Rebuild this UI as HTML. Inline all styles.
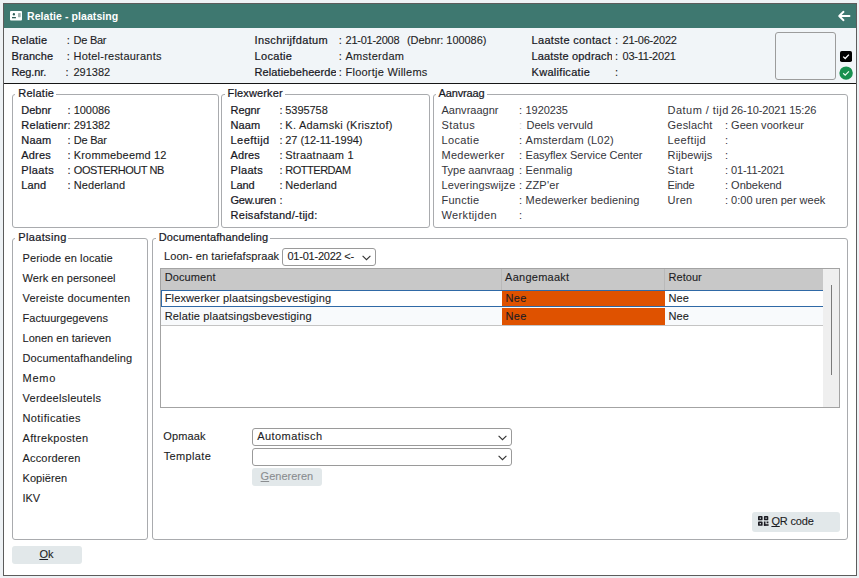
<!DOCTYPE html>
<html><head><meta charset="utf-8"><style>
html,body{margin:0;padding:0;width:859px;height:578px;overflow:hidden;background:#eef2f5;}
.a{position:absolute;}
.t{position:absolute;font-family:"Liberation Sans",sans-serif;font-size:11px;line-height:15px;color:#1d1d24;white-space:nowrap;-webkit-text-stroke:0.1px currentColor;}
.m{-webkit-text-stroke:0.22px currentColor;color:#18181f}
.w{color:#fff;-webkit-text-stroke:0;}
.g{color:#34343a;-webkit-text-stroke:0;}
u{text-decoration:underline;text-underline-offset:1px;text-decoration-skip-ink:none;}
</style></head><body>
<div class="a" style="left:3px;top:3px;width:854px;height:573px;border:1px solid #5c5c5c;background:#fff;box-sizing:border-box"></div>
<div class="a" style="left:4px;top:4px;width:852px;height:24px;background:#3e7870"></div>
<svg class="a" style="left:10px;top:11px" width="12" height="10" viewBox="0 0 12 10">
<rect x="0" y="0" width="12" height="9.6" rx="1" fill="#fcfffe"/>
<ellipse cx="3.9" cy="3.3" rx="1.1" ry="1.25" fill="#2e5f58"/>
<rect x="2" y="6" width="3.9" height="1.3" fill="#2e5f58"/>
<rect x="8" y="2.1" width="2.7" height="4.1" rx="0.4" fill="#a3b5b2"/>
</svg>
<div class="t w" style="left:27px;top:9px;letter-spacing:0.075px;font-weight:bold;font-size:10.5px">Relatie - plaatsing</div>
<svg class="a" style="left:837px;top:10px" width="14" height="12" viewBox="0 0 14 12">
<path d="M12.5 6 H2.5 M6.5 1.8 L2.2 6 L6.5 10.2" stroke="#fff" stroke-width="1.9" fill="none" stroke-linecap="round" stroke-linejoin="round"/>
</svg>
<div class="a" style="left:4px;top:28px;width:852px;height:55px;background:#f1f5f8"></div>
<div class="a" style="left:4px;top:83px;width:852px;height:1px;background:#161616"></div>
<div class="t m" style="left:11.5px;top:33px;letter-spacing:0.210px;">Relatie</div>
<div class="t " style="left:66.8px;top:33px;">:</div>
<div class="t " style="left:73.5px;top:33px;letter-spacing:-0.247px;">De Bar</div>
<div class="t m" style="left:11.5px;top:49px;letter-spacing:0.088px;">Branche</div>
<div class="t " style="left:66.8px;top:49px;">:</div>
<div class="t " style="left:73.5px;top:49px;letter-spacing:0.221px;">Hotel-restaurants</div>
<div class="t m" style="left:11.5px;top:65px;letter-spacing:-0.128px;">Reg.nr.</div>
<div class="t " style="left:65.4px;top:65px;">:</div>
<div class="t " style="left:73.5px;top:65px;letter-spacing:-0.021px;">291382</div>
<div class="t m" style="left:254.5px;top:33px;letter-spacing:0.364px;">Inschrijfdatum</div>
<div class="t " style="left:338.7px;top:33px;">:</div>
<div class="t " style="left:345.5px;top:33px;letter-spacing:-0.241px;">21-01-2008</div>
<div class="t " style="left:407px;top:33px;letter-spacing:-0.050px;">(Debnr: 100086)</div>
<div class="t m" style="left:254.5px;top:49px;letter-spacing:0.322px;">Locatie</div>
<div class="t " style="left:338.7px;top:49px;">:</div>
<div class="t " style="left:345.5px;top:49px;letter-spacing:0.283px;">Amsterdam</div>
<div class="a" style="left:254px;top:65px;width:82px;height:15px;overflow:hidden">
<div class="t m" style="left:0.5px;top:0px;letter-spacing:0.105px;">Relatiebeheerder</div>
</div>
<div class="t " style="left:338.7px;top:65px;">:</div>
<div class="t " style="left:345.5px;top:65px;letter-spacing:0.238px;">Floortje Willems</div>
<div class="t m" style="left:531.5px;top:33px;letter-spacing:0.328px;">Laatste contact</div>
<div class="t " style="left:615px;top:33px;">:</div>
<div class="t " style="left:622.5px;top:33px;letter-spacing:-0.207px;">21-06-2022</div>
<div class="a" style="left:531px;top:49px;width:81px;height:15px;overflow:hidden">
<div class="t m" style="left:0.5px;top:0px;letter-spacing:0.172px;">Laatste opdracht</div>
</div>
<div class="t " style="left:615px;top:49px;">:</div>
<div class="t " style="left:622.5px;top:49px;letter-spacing:-0.228px;">03-11-2021</div>
<div class="t m" style="left:531.5px;top:65px;letter-spacing:0.298px;">Kwalificatie</div>
<div class="t " style="left:615px;top:65px;">:</div>
<div class="a" style="left:775px;top:32px;width:61px;height:48px;border:1px solid #9c9c9c;border-radius:3px;box-sizing:border-box;background:#f1f5f8"></div>
<svg class="a" style="left:840px;top:51px" width="12" height="11" viewBox="0 0 12 11">
<rect x="0" y="0" width="12" height="11" rx="1.8" fill="#000"/>
<path d="M3.2 5.6 L5.2 7.5 L8.9 3.6" stroke="#fff" stroke-width="1.3" fill="none"/>
</svg>
<svg class="a" style="left:839px;top:66px" width="15" height="15" viewBox="0 0 15 15">
<circle cx="7.1" cy="7.1" r="6.7" fill="#17904f"/>
<path d="M4.2 7.3 L6.2 9.1 L9.9 5.4" stroke="#f0fff4" stroke-width="1.2" fill="none"/>
</svg>
<div class="a" style="left:12px;top:94px;width:207px;height:134px;border:1px solid #a9abae;border-radius:3px;box-sizing:border-box"></div>
<div class="a" style="left:15.2px;top:93px;width:40.599999999999994px;height:3px;background:#fff"></div>
<div class="t m" style="left:18.2px;top:86px;letter-spacing:0.260px;">Relatie</div>
<div class="a" style="left:221px;top:94px;width:209px;height:134px;border:1px solid #a9abae;border-radius:3px;box-sizing:border-box"></div>
<div class="a" style="left:224.5px;top:93px;width:60.0px;height:3px;background:#fff"></div>
<div class="t m" style="left:227.5px;top:86px;letter-spacing:0.157px;">Flexwerker</div>
<div class="a" style="left:433px;top:94px;width:415px;height:134px;border:1px solid #a9abae;border-radius:3px;box-sizing:border-box"></div>
<div class="a" style="left:435.5px;top:93px;width:51.0px;height:3px;background:#fff"></div>
<div class="t m" style="left:438.5px;top:86px;letter-spacing:-0.127px;">Aanvraag</div>
<div class="a" style="left:12px;top:238px;width:136px;height:302px;border:1px solid #a9abae;border-radius:3px;box-sizing:border-box"></div>
<div class="a" style="left:15.2px;top:237px;width:53.0px;height:3px;background:#fff"></div>
<div class="t m" style="left:18.2px;top:230px;letter-spacing:0.369px;">Plaatsing</div>
<div class="a" style="left:152px;top:238px;width:696px;height:302px;border:1px solid #a9abae;border-radius:3px;box-sizing:border-box"></div>
<div class="a" style="left:155.8px;top:237px;width:114.09999999999997px;height:3px;background:#fff"></div>
<div class="t m" style="left:158.8px;top:230px;letter-spacing:0.127px;">Documentafhandeling</div>
<div class="t m" style="left:21.3px;top:103px;letter-spacing:-0.015px;">Debnr</div>
<div class="t " style="left:67.4px;top:103px;">:</div>
<div class="t " style="left:73.8px;top:103px;letter-spacing:-0.081px;">100086</div>
<div class="t m" style="left:21.3px;top:118px;letter-spacing:0.272px;">Relatienr</div>
<div class="t " style="left:67.4px;top:118px;">:</div>
<div class="t " style="left:73.8px;top:118px;letter-spacing:-0.081px;">291382</div>
<div class="t m" style="left:21.3px;top:133px;letter-spacing:0.186px;">Naam</div>
<div class="t " style="left:67.4px;top:133px;">:</div>
<div class="t " style="left:73.8px;top:133px;letter-spacing:-0.247px;">De Bar</div>
<div class="t m" style="left:21.3px;top:148px;letter-spacing:0.166px;">Adres</div>
<div class="t " style="left:67.4px;top:148px;">:</div>
<div class="t " style="left:73.8px;top:148px;letter-spacing:0.163px;">Krommebeemd 12</div>
<div class="t m" style="left:21.3px;top:163px;letter-spacing:0.366px;">Plaats</div>
<div class="t " style="left:67.4px;top:163px;">:</div>
<div class="t " style="left:73.8px;top:163px;letter-spacing:-0.429px;">OOSTERHOUT NB</div>
<div class="t m" style="left:21.3px;top:178px;letter-spacing:0.143px;">Land</div>
<div class="t " style="left:67.4px;top:178px;">:</div>
<div class="t " style="left:73.8px;top:178px;letter-spacing:0.068px;">Nederland</div>
<div class="t m" style="left:230.5px;top:103px;letter-spacing:-0.065px;">Regnr</div>
<div class="t " style="left:279.4px;top:103px;">:</div>
<div class="t " style="left:285.3px;top:103px;letter-spacing:-0.054px;">5395758</div>
<div class="t m" style="left:230.5px;top:118px;letter-spacing:0.119px;">Naam</div>
<div class="t " style="left:279.4px;top:118px;">:</div>
<div class="t " style="left:285.3px;top:118px;letter-spacing:0.251px;">K. Adamski (Krisztof)</div>
<div class="t m" style="left:230.5px;top:133px;letter-spacing:0.461px;">Leeftijd</div>
<div class="t " style="left:279.4px;top:133px;">:</div>
<div class="t " style="left:285.3px;top:133px;letter-spacing:-0.069px;">27 (12-11-1994)</div>
<div class="t m" style="left:230.5px;top:148px;letter-spacing:0.116px;">Adres</div>
<div class="t " style="left:279.4px;top:148px;">:</div>
<div class="t " style="left:285.3px;top:148px;letter-spacing:0.206px;">Straatnaam 1</div>
<div class="t m" style="left:230.5px;top:163px;letter-spacing:0.326px;">Plaats</div>
<div class="t " style="left:279.4px;top:163px;">:</div>
<div class="t " style="left:285.3px;top:163px;letter-spacing:-0.483px;">ROTTERDAM</div>
<div class="t m" style="left:230.5px;top:178px;letter-spacing:-0.090px;">Land</div>
<div class="t " style="left:279.4px;top:178px;">:</div>
<div class="t " style="left:285.3px;top:178px;letter-spacing:0.093px;">Nederland</div>
<div class="t m" style="left:230.5px;top:193px;letter-spacing:-0.226px;">Gew.uren</div>
<div class="t " style="left:279.4px;top:193px;">:</div>
<div class="t m" style="left:230.5px;top:208px;letter-spacing:0.287px;">Reisafstand/-tijd:</div>
<div class="t g" style="left:441.5px;top:103px;letter-spacing:0.015px;">Aanvraagnr</div>
<div class="t g" style="left:519px;top:103px;">:</div>
<div class="t g" style="left:525.6px;top:103px;letter-spacing:-0.087px;">1920235</div>
<div class="t g" style="left:441.5px;top:118px;letter-spacing:0.403px;">Status</div>
<div class="t g" style="left:441.5px;top:133px;letter-spacing:0.338px;">Locatie</div>
<div class="t g" style="left:519px;top:133px;">:</div>
<div class="t g" style="left:525.6px;top:133px;letter-spacing:0.224px;">Amsterdam (L02)</div>
<div class="t g" style="left:441.5px;top:148px;letter-spacing:0.253px;">Medewerker</div>
<div class="t g" style="left:519px;top:148px;">:</div>
<div class="t g" style="left:525.6px;top:148px;letter-spacing:-0.022px;">Easyflex Service Center</div>
<div class="t g" style="left:441.5px;top:163px;letter-spacing:-0.023px;">Type aanvraag</div>
<div class="t g" style="left:519px;top:163px;">:</div>
<div class="t g" style="left:525.6px;top:163px;letter-spacing:0.135px;">Eenmalig</div>
<div class="t g" style="left:441.5px;top:178px;letter-spacing:0.127px;">Leveringswijze</div>
<div class="t g" style="left:519px;top:178px;">:</div>
<div class="t g" style="left:525.6px;top:178px;letter-spacing:0.169px;">ZZP'er</div>
<div class="t g" style="left:441.5px;top:193px;letter-spacing:0.238px;">Functie</div>
<div class="t g" style="left:519px;top:193px;">:</div>
<div class="t g" style="left:525.6px;top:193px;letter-spacing:0.137px;">Medewerker bediening</div>
<div class="t g" style="left:441.5px;top:208px;letter-spacing:0.360px;">Werktijden</div>
<div class="t g" style="left:519px;top:208px;">:</div>
<div class="t g" style="left:519px;top:118px;color:#d0d0d0">:</div>
<div class="t g" style="left:526.6px;top:118px;letter-spacing:-0.028px;">Deels vervuld</div>
<div class="t g" style="left:667.6px;top:103px;letter-spacing:0.461px;">Datum / tijd</div>
<div class="t g" style="left:667.6px;top:118px;letter-spacing:0.184px;">Geslacht</div>
<div class="t g" style="left:725px;top:118px;">:</div>
<div class="t g" style="left:731.1px;top:118px;letter-spacing:0.011px;">Geen voorkeur</div>
<div class="t g" style="left:667.6px;top:133px;letter-spacing:0.376px;">Leeftijd</div>
<div class="t g" style="left:725px;top:133px;">:</div>
<div class="t g" style="left:667.6px;top:148px;letter-spacing:0.163px;">Rijbewijs</div>
<div class="t g" style="left:725px;top:148px;">:</div>
<div class="t g" style="left:667.6px;top:163px;letter-spacing:0.493px;">Start</div>
<div class="t g" style="left:725px;top:163px;">:</div>
<div class="t g" style="left:731.1px;top:163px;letter-spacing:-0.206px;">01-11-2021</div>
<div class="t g" style="left:667.6px;top:178px;letter-spacing:-0.283px;">Einde</div>
<div class="t g" style="left:725px;top:178px;">:</div>
<div class="t g" style="left:731.1px;top:178px;letter-spacing:-0.023px;">Onbekend</div>
<div class="t g" style="left:667.6px;top:193px;letter-spacing:0.253px;">Uren</div>
<div class="t g" style="left:725px;top:193px;">:</div>
<div class="t g" style="left:731.1px;top:193px;letter-spacing:0.002px;">0:00 uren per week</div>
<div class="t g" style="left:731.1px;top:103px;letter-spacing:-0.103px;">26-10-2021 15:26</div>
<div class="t " style="left:22.5px;top:251px;letter-spacing:0.120px;">Periode en locatie</div>
<div class="t " style="left:22.5px;top:271px;letter-spacing:0.055px;">Werk en personeel</div>
<div class="t " style="left:22.5px;top:291px;letter-spacing:0.231px;">Vereiste documenten</div>
<div class="t " style="left:22.5px;top:311px;letter-spacing:0.029px;">Factuurgegevens</div>
<div class="t " style="left:22.5px;top:331px;letter-spacing:0.033px;">Lonen en tarieven</div>
<div class="t " style="left:22.5px;top:351px;letter-spacing:0.143px;">Documentafhandeling</div>
<div class="t " style="left:22.5px;top:371px;letter-spacing:0.779px;">Memo</div>
<div class="t " style="left:22.5px;top:391px;letter-spacing:0.271px;">Verdeelsleutels</div>
<div class="t " style="left:22.5px;top:411px;letter-spacing:0.391px;">Notificaties</div>
<div class="t " style="left:22.5px;top:431px;letter-spacing:0.340px;">Aftrekposten</div>
<div class="t " style="left:22.5px;top:451px;letter-spacing:0.172px;">Accorderen</div>
<div class="t " style="left:22.5px;top:471px;letter-spacing:0.067px;">Kopiëren</div>
<div class="t " style="left:22.5px;top:491px;letter-spacing:-0.015px;">IKV</div>
<div class="t " style="left:164px;top:249px;letter-spacing:0.090px;">Loon- en tariefafspraak</div>
<div class="a" style="left:282px;top:248px;width:94px;height:18px;border:1px solid #9a9a9a;border-radius:3px;box-sizing:border-box;background:#fff"></div>
<div class="t " style="left:287.4px;top:249px;letter-spacing:-0.218px;">01-01-2022 &lt;-</div>
<svg class="a" style="left:362px;top:255px" width="9" height="6" viewBox="0 0 9 6"><path d="M0.6 0.8 L4.5 4.7 L8.4 0.8" stroke="#333" stroke-width="1.1" fill="none"/></svg>
<div class="a" style="left:160px;top:268px;width:680px;height:140px;border:1px solid #a3a3a3;box-sizing:border-box;background:#fff"></div>
<div class="a" style="left:161px;top:269px;width:662px;height:21px;background:#c8c8c8"></div>
<div class="a" style="left:501px;top:269px;width:1px;height:21px;background:#b9b9b9"></div>
<div class="a" style="left:664px;top:269px;width:1px;height:21px;background:#b9b9b9"></div>
<div class="t " style="left:164.7px;top:270px;letter-spacing:0.109px;">Document</div>
<div class="t " style="left:505.1px;top:270px;letter-spacing:0.249px;">Aangemaakt</div>
<div class="t " style="left:668.5px;top:270px;letter-spacing:0.037px;">Retour</div>
<div class="a" style="left:161px;top:290px;width:662px;height:17px;border:1px solid #2f69a6;border-right:0;box-sizing:border-box;background:#fff"></div>
<div class="a" style="left:502px;top:291px;width:163px;height:15px;background:#df5200"></div>
<div class="t " style="left:164.7px;top:291px;letter-spacing:0.141px;">Flexwerker plaatsingsbevestiging</div>
<div class="t " style="left:505.6px;top:291px;letter-spacing:0.260px;">Nee</div>
<div class="t " style="left:668.5px;top:291px;letter-spacing:0.110px;">Nee</div>
<div class="a" style="left:161px;top:307px;width:662px;height:18px;background:#f8fafc"></div>
<div class="a" style="left:161px;top:325px;width:662px;height:1px;background:#c4c4c4"></div>
<div class="a" style="left:502px;top:308px;width:163px;height:17px;background:#df5200"></div>
<div class="t " style="left:164.7px;top:309px;letter-spacing:0.158px;">Relatie plaatsingsbevestiging</div>
<div class="t " style="left:505.6px;top:309px;letter-spacing:0.260px;">Nee</div>
<div class="t " style="left:668.5px;top:309px;letter-spacing:0.110px;">Nee</div>
<div class="a" style="left:823px;top:269px;width:16px;height:138px;background:#efefef"></div>
<div class="a" style="left:831px;top:285px;width:1px;height:90px;background:#7a7a7a"></div>
<div class="t " style="left:163.3px;top:429px;letter-spacing:0.106px;">Opmaak</div>
<div class="t " style="left:163.7px;top:449px;letter-spacing:0.367px;">Template</div>
<div class="a" style="left:252px;top:428px;width:260px;height:18px;border:1px solid #9a9a9a;border-radius:3px;box-sizing:border-box;background:#fff"></div>
<div class="a" style="left:252px;top:448px;width:260px;height:18px;border:1px solid #9a9a9a;border-radius:3px;box-sizing:border-box;background:#fff"></div>
<div class="t " style="left:257.3px;top:429px;letter-spacing:0.417px;">Automatisch</div>
<svg class="a" style="left:498px;top:435px" width="9" height="6" viewBox="0 0 9 6"><path d="M0.6 0.8 L4.5 4.7 L8.4 0.8" stroke="#333" stroke-width="1.1" fill="none"/></svg>
<svg class="a" style="left:498px;top:455px" width="9" height="6" viewBox="0 0 9 6"><path d="M0.6 0.8 L4.5 4.7 L8.4 0.8" stroke="#333" stroke-width="1.1" fill="none"/></svg>
<div class="a" style="left:252px;top:468px;width:70px;height:18px;background:#e2e8ea;border-radius:3px"></div>
<div class="t " style="left:260.6px;top:469px;letter-spacing:0.001px;color:#8a8d90"><u>G</u>enereren</div>
<div class="a" style="left:752px;top:512px;width:88px;height:20px;background:#e2e8ea;border-radius:3px"></div>
<svg class="a" style="left:758px;top:516px" width="11" height="10" viewBox="0 0 11 10">
<g fill="#1d1d24">
<rect x="0" y="0" width="4.6" height="4.3" rx="0.9"/><rect x="5.9" y="0" width="4.4" height="4.3" rx="0.9"/>
<rect x="0" y="5.5" width="4.6" height="4.3" rx="0.9"/>
<rect x="5.9" y="5.5" width="1.6" height="4.3"/><rect x="5.9" y="8.2" width="4.7" height="1.6"/><rect x="8.6" y="5.5" width="1.8" height="1.8"/>
</g>
<g fill="#e2e8ea">
<rect x="1.7" y="1.5" width="1.2" height="1.3"/><rect x="7.5" y="1.5" width="1.2" height="1.3"/>
<rect x="1.7" y="7.0" width="1.2" height="1.3"/>
</g>
</svg>
<div class="t " style="left:771.4px;top:514px;letter-spacing:-0.168px;"><u>Q</u>R code</div>
<div class="a" style="left:12px;top:546px;width:70px;height:18px;background:#e2e8ea;border-radius:3px"></div>
<div class="t " style="left:39.4px;top:547px;letter-spacing:0.144px;"><u>O</u>k</div>
</body></html>
